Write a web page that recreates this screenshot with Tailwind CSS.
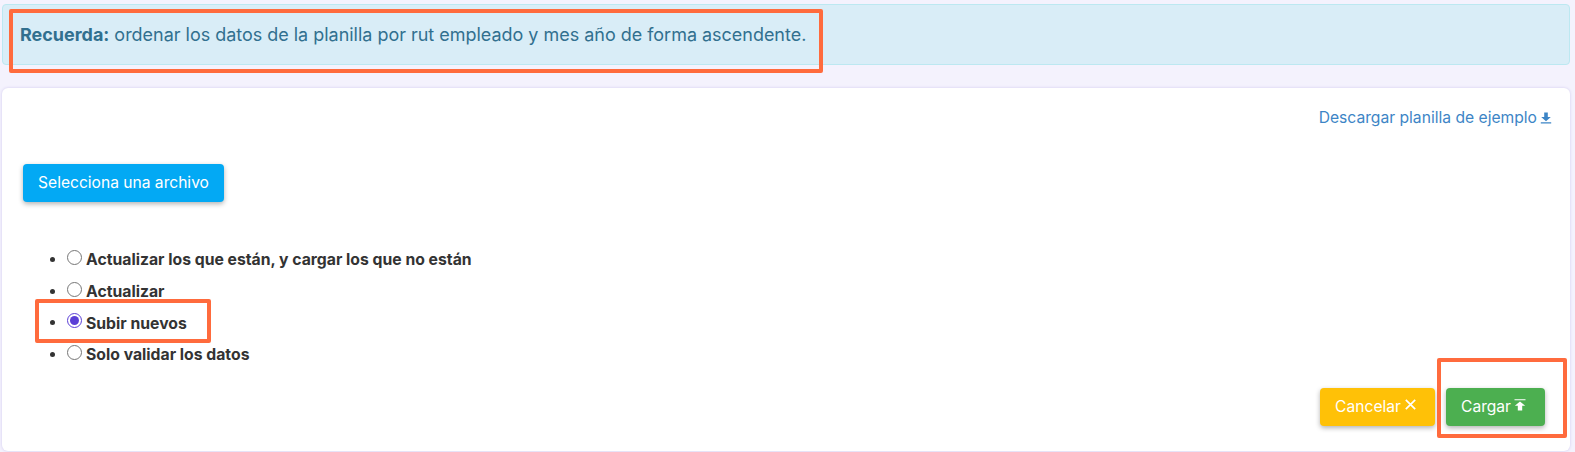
<!DOCTYPE html>
<html lang="es">
<head>
<meta charset="utf-8">
<script src="https://cdn.jsdelivr.net/npm/@tailwindcss/browser@4"></script>
</head>
<body class="bg-[#f4f2fd] font-[Inter,sans-serif] text-[#333]">
<div class="relative w-[1575px] h-[452px] overflow-hidden pt-1 pl-[2px] pr-[5px]">
  <div class="h-[61px] rounded-[4px] border border-[#bce8f1] bg-[#d9edf7] pl-[17px] pt-[18px] text-[17.97px] leading-6 text-[#31708f]">
    <b class="font-bold">Recuerda:</b> ordenar los datos de la planilla por rut empleado y mes año de forma ascendente.
  </div>
  <div class="mt-[23px] h-[363px] rounded-[6px] bg-white shadow-[0_0_3px_#cfc9ee] pl-[21px] pr-[18px] pt-[20px]">
    <div class="flex justify-end items-center gap-[3px] text-[15.65px] leading-5 text-[#3d85c6]">
      <span>Descargar planilla de ejemplo</span>
      <svg width="12" height="12" viewBox="0 0 12 12" fill="currentColor"><path d="M4.200 .500h3.600v4.500h3L6 9.300 1.200 5h3zM.800 10.300h10.400v1.300H.800z"/></svg>
    </div>
    <button class="mt-[36px] block h-[38px] w-[201px] rounded-[4px] bg-[#03a9f4] text-center text-[15.6px] text-white shadow-[0_2px_5px_rgba(0,0,0,0.3)]">Selecciona una archivo</button>
    <ul class="mt-[42px] list-disc pl-[44px] text-[15.75px] font-bold leading-[31.3px] text-[#333]">
      <li><label class="inline-flex items-center gap-[4px]"><input type="radio" name="modo" class="m-0 mb-[5px] size-[15px] accent-[#5b3fd6]"><span>Actualizar los que están, y cargar los que no están</span></label></li>
      <li><label class="inline-flex items-center gap-[4px]"><input type="radio" name="modo" class="m-0 mb-[5px] size-[15px] accent-[#5b3fd6]"><span>Actualizar</span></label></li>
      <li><label class="inline-flex items-center gap-[4px]"><input type="radio" name="modo" checked class="m-0 mb-[5px] size-[15px] accent-[#5b3fd6]"><span>Subir nuevos</span></label></li>
      <li><label class="inline-flex items-center gap-[4px]"><input type="radio" name="modo" class="m-0 mb-[5px] size-[15px] accent-[#5b3fd6]"><span>Solo validar los datos</span></label></li>
    </ul>
    <div class="mt-[17px] flex justify-end gap-[11px] pr-[7px]">
      <button class="flex h-[38px] w-[115px] items-center justify-center gap-[4px] rounded-[4px] bg-[#ffc107] pr-[4px] text-[15.6px] text-white shadow-[0_2px_5px_rgba(0,0,0,0.3)]">Cancelar
        <svg width="11" height="11" viewBox="0 0 11 11" fill="none" stroke="currentColor" stroke-width="1.700" class="mb-[4px]"><path d="M.800 .800l9.400 9.400M10.200 .800L.800 10.200"/></svg>
      </button>
      <button class="flex h-[38px] w-[99px] items-center justify-center gap-[3px] rounded-[4px] bg-[#4caf50] pr-[4px] text-[15.6px] text-white shadow-[0_2px_5px_rgba(0,0,0,0.3)]">Cargar
        <svg width="12" height="12" viewBox="0 0 12 12" fill="currentColor" class="mb-[4px]"><path d="M.500 .200h11v1.100H.500zM6 2.500l5.200 4.300H8.200v4.700H3.800V6.800H.800z"/></svg>
      </button>
    </div>
  </div>
  <div class="pointer-events-none absolute left-[9px] top-[9px] h-[64px] w-[814px] rounded-[2px] border-[4px] border-[#ff6b3d]"></div>
  <div class="pointer-events-none absolute left-[35px] top-[299px] h-[44px] w-[176px] rounded-[2px] border-[4px] border-[#ff6b3d]"></div>
  <div class="pointer-events-none absolute left-[1437px] top-[358px] h-[80px] w-[130px] rounded-[2px] border-[4px] border-[#ff6b3d]"></div>
</div>
</body>
</html>
